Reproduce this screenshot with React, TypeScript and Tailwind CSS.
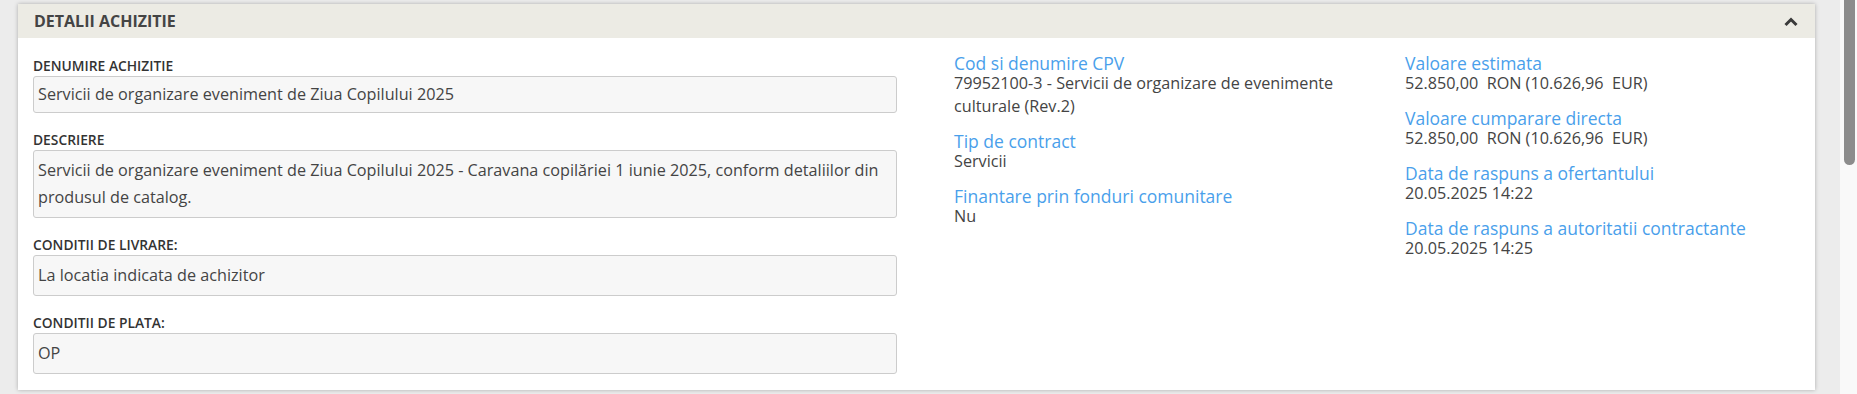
const leftFields = [
  { label: "Denumire achizitie", value: "Servicii de organizare eveniment de Ziua Copilului 2025", input: true },
  {
    label: "Descriere",
    value:
      "Servicii de organizare eveniment de Ziua Copilului 2025 - Caravana copilăriei 1 iunie 2025, conform detaliilor din produsul de catalog.",
  },
  { label: "Conditii de livrare:", value: "La locatia indicata de achizitor" },
  { label: "Conditii de plata:", value: "OP" },
];

const middle = [
  { title: "Cod si denumire CPV", value: "79952100-3 - Servicii de organizare de evenimente culturale (Rev.2)" },
  { title: "Tip de contract", value: "Servicii" },
  { title: "Finantare prin fonduri comunitare", value: "Nu" },
];

const right = [
  { title: "Valoare estimata", value: "52.850,00\u00a0 RON (10.626,96\u00a0 EUR)" },
  { title: "Valoare cumparare directa", value: "52.850,00\u00a0 RON (10.626,96\u00a0 EUR)" },
  { title: "Data de raspuns a ofertantului", value: "20.05.2025 14:22" },
  { title: "Data de raspuns a autoritatii contractante", value: "20.05.2025 14:25" },
];

function InfoBlock({ title, value }: { title: string; value: string }) {
  return (
    <div>
      <div className="text-[17.5px] leading-[18px] text-[#4a9feb]">{title}</div>
      <div className="text-[16.2px] leading-[23px] text-[#444]">{value}</div>
    </div>
  );
}

export default function App() {
  return (
    <div className="flex h-[394px] w-full overflow-hidden bg-[#ececec] font-['Open_Sans',sans-serif]">
      <div className="flex-1 pt-[4px] pb-[4px] pl-[18px] pr-[25px]">
        <div className="bg-white shadow-[0_0_4px_rgba(0,0,0,0.28)]">
          <div className="flex h-[34px] items-center justify-between bg-[#ecebe4] pl-[16px] pr-[17px]">
            <h3 className="text-[16px] font-bold uppercase leading-[34px] text-[#444]">Detalii achizitie</h3>
            <svg width="14" height="10" viewBox="0 0 14 10" className="mt-[1px]">
              <polyline points="1.5,8 7,2.5 12.5,8" fill="none" stroke="#3a3a3a" strokeWidth="3" />
            </svg>
          </div>
          <div className="grid grid-cols-[864px_451px_1fr] pl-[15px] pt-[18px] pb-[16px]">
            <div className="flex flex-col gap-[17px]">
              {leftFields.map((f) => (
                <div key={f.label}>
                  <div className="text-[13.8px] font-semibold uppercase leading-[20px] text-[#333]">{f.label}</div>
                  <div
                    className={
                      f.input
                        ? "rounded-[3px] border border-[#cccccc] bg-[#f7f7f7] px-[4px] py-[6px] text-[16.2px] leading-[23px] text-[#444]"
                        : "rounded-[3px] border border-[#cccccc] bg-[#f7f7f7] px-[4px] py-[6px] text-[16.2px] leading-[27px] text-[#444]"
                    }
                  >
                    {f.value}
                  </div>
                </div>
              ))}
            </div>
            <div className="-mt-[2px] flex flex-col gap-[14px] pl-[57px]">
              {middle.map((b) => (
                <InfoBlock key={b.title} {...b} />
              ))}
            </div>
            <div className="-mt-[2px] flex flex-col gap-[14px] pl-[57px]">
              {right.map((b) => (
                <InfoBlock key={b.title} {...b} />
              ))}
            </div>
          </div>
        </div>
      </div>
      <div className="w-[17px] bg-[#f9f9f9] pl-[4px] pr-[2px]">
        <div className="h-[165px] rounded-b-[6px] bg-[#8c8c8c]" />
      </div>
    </div>
  );
}
